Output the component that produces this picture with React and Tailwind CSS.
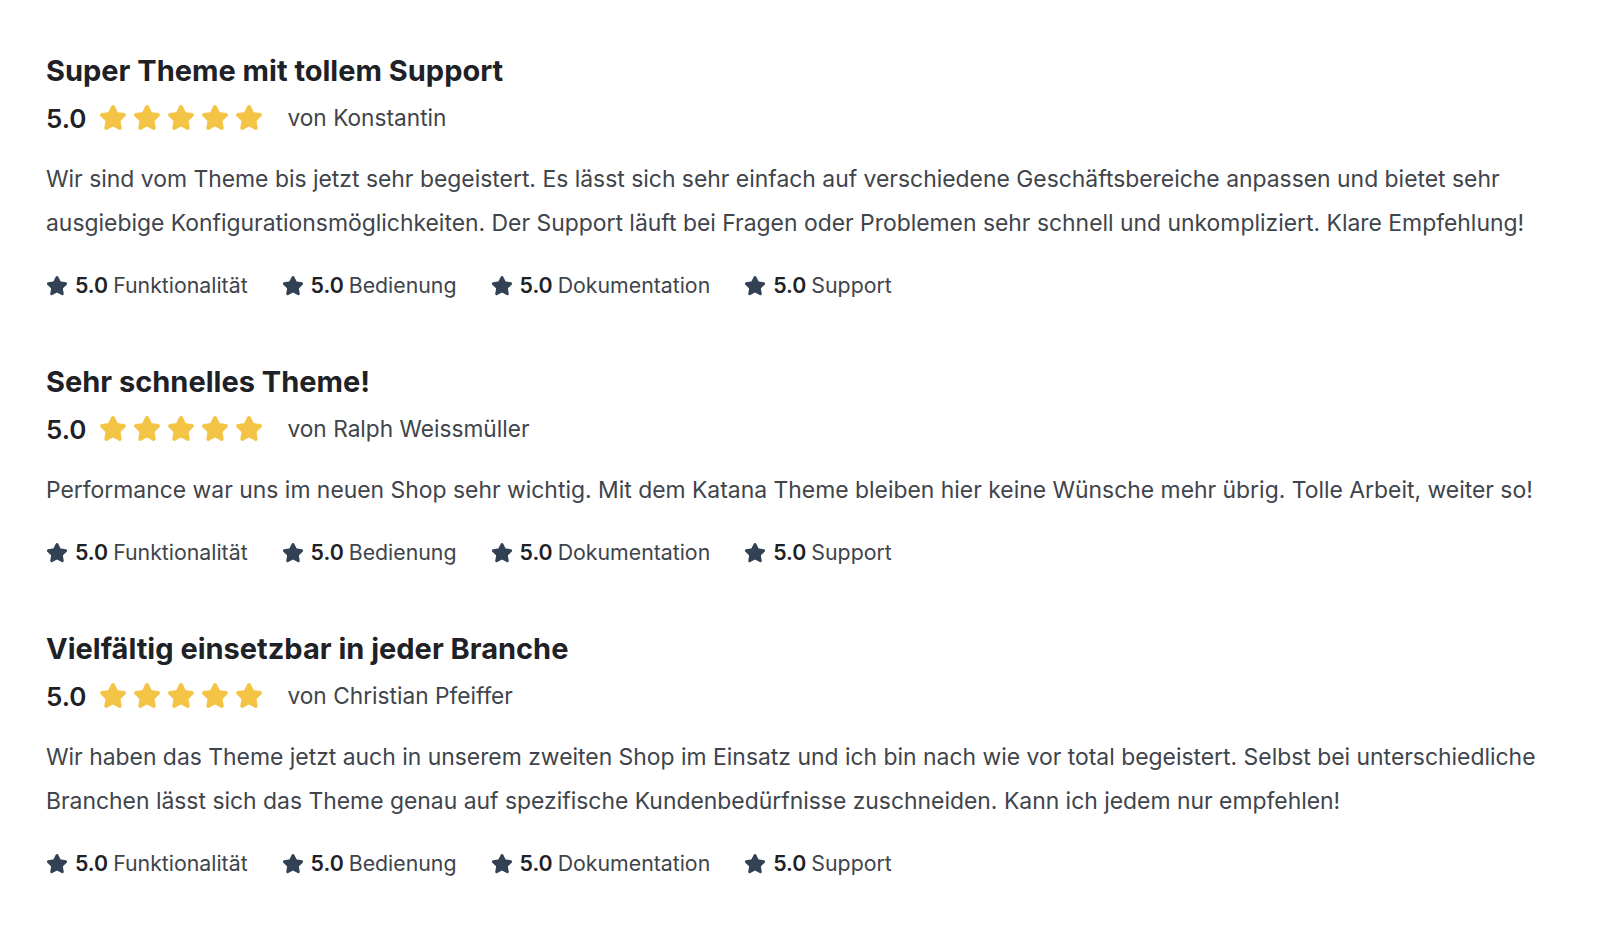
import { Star } from "lucide-react";

const reviews = [
  {
    title: "Super Theme mit tollem Support",
    author: "Konstantin",
    text: "Wir sind vom Theme bis jetzt sehr begeistert. Es lässt sich sehr einfach auf verschiedene Geschäftsbereiche anpassen und bietet sehr ausgiebige Konfigurationsmöglichkeiten. Der Support läuft bei Fragen oder Problemen sehr schnell und unkompliziert. Klare Empfehlung!",
  },
  {
    title: "Sehr schnelles Theme!",
    author: "Ralph Weissmüller",
    text: "Performance war uns im neuen Shop sehr wichtig. Mit dem Katana Theme bleiben hier keine Wünsche mehr übrig. Tolle Arbeit, weiter so!",
  },
  {
    title: "Vielfältig einsetzbar in jeder Branche",
    author: "Christian Pfeiffer",
    text: "Wir haben das Theme jetzt auch in unserem zweiten Shop im Einsatz und ich bin nach wie vor total begeistert. Selbst bei unterschiedliche Branchen lässt sich das Theme genau auf spezifische Kundenbedürfnisse zuschneiden. Kann ich jedem nur empfehlen!",
  },
];

const criteria = ["Funktionalität", "Bedienung", "Dokumentation", "Support"];

function Review({ r }) {
  return (
    <div className="flex flex-col">
      <h2 className="text-[29px] leading-[36px] font-bold text-[#1e2126]">{r.title}</h2>
      <div className="mt-[11px] flex items-center h-[36px]">
        <span className="text-[26px] font-semibold text-[#1e2126] mr-[13px]">5.0</span>
        <div className="flex gap-[6px]">
          {[0, 1, 2, 3, 4].map((i) => (
            <Star key={i} size={28} fill="#f3c445" stroke="#f3c445" strokeWidth={2.2} strokeLinejoin="round" />
          ))}
        </div>
        <span className="ml-[24px] text-[22.7px] text-[#40444b]">von {r.author}</span>
      </div>
      <p className="mt-[21px] text-[22.9px] leading-[44px] text-[#40444b]">{r.text}</p>
      <div className="mt-[27px] flex items-center gap-[34px] h-[28px] text-[21.3px] text-[#40444b]">
        {criteria.map((c) => (
          <div key={c} className="flex items-center">
            <Star size={22} fill="#334155" stroke="#334155" strokeWidth={2} strokeLinejoin="round" />
            <span className="ml-[7px] font-semibold text-[#1e2126]">5.0</span>
            <span className="ml-[5px]">{c}</span>
          </div>
        ))}
      </div>
    </div>
  );
}

export default function App() {
  return (
    <div className="w-[1600px] h-[927px] bg-white px-[46px] pt-[53px] flex flex-col gap-[64px]" style={{ fontFamily: "Inter, 'Noto Sans', sans-serif" }}>
      {reviews.map((r) => (
        <Review key={r.title} r={r} />
      ))}
    </div>
  );
}
